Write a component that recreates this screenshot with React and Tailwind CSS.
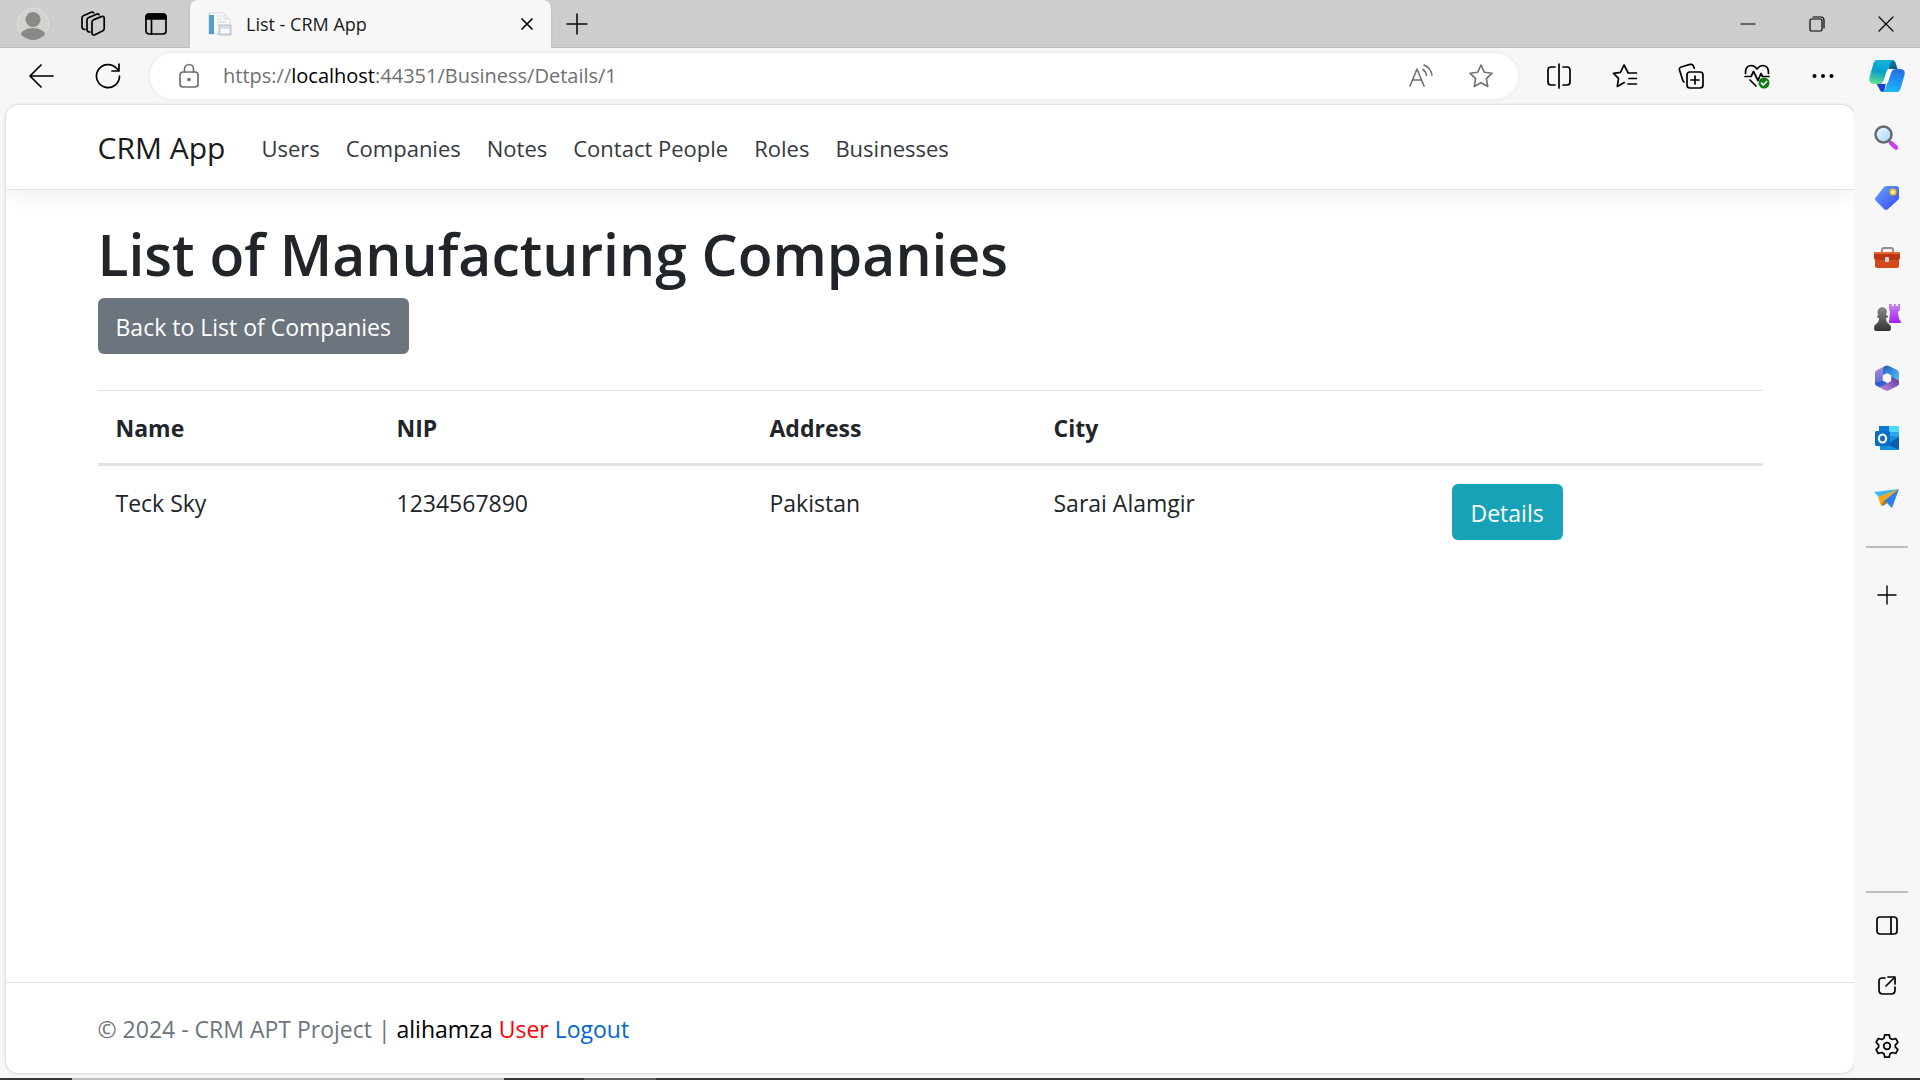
import React from "react";

const Ico = ({ size = 26, sw = 1.7, className = "", children }) => (
  <svg width={size} height={size} viewBox={`0 0 ${size} ${size}`} fill="none" stroke="currentColor" strokeWidth={sw} strokeLinecap="round" strokeLinejoin="round" className={`shrink-0 ${className}`} aria-hidden="true">
    {children}
  </svg>
);

const IconButton = ({ label, className = "", children }) => (
  <button type="button" aria-label={label} className={`flex items-center justify-center shrink-0 ${className}`}>
    {children}
  </button>
);

function TabStrip() {
  return (
    <div className="flex h-12 items-stretch border-b border-[#bdbdbd] bg-[#cdcdcd]">
      <div className="flex w-[190px] shrink-0 items-center">
        <IconButton label="Profile" className="ml-4 w-[34px]">
          <svg width="34" height="34" viewBox="0 0 34 34" aria-hidden="true">
            <defs><clipPath id="avatar"><circle cx="17" cy="17" r="16" /></clipPath></defs>
            <circle cx="17" cy="17" r="16" fill="#d4d2cf" stroke="#dedcd8" />
            <g clipPath="url(#avatar)" fill="#8b8885">
              <circle cx="17" cy="12.500" r="7.500" />
              <ellipse cx="17" cy="29" rx="12.500" ry="8" />
            </g>
          </svg>
        </IconButton>
        <IconButton label="Workspaces" className="ml-[29px] w-[28px]">
          <Ico size={28}>
            <path d="M13 12q0-1.500 1.300-2.100l8-3.300q2.700-1 2.900 1.400v10.500q0 1.500-1.300 2.200l-8 4q-2.700 1-2.900-1.600z" />
            <path d="M11 22q-3 0-3-2.200V10q0-1.600 1.300-2.200l8.200-3.600q1.800-.7 2.500.6" />
            <path d="M6 19.500q-3-.3-3-2.500V8q0-1.600 1.300-2.200l8-3.500q1.700-.7 2.500.6" />
          </Ico>
        </IconButton>
        <IconButton label="Tab actions menu" className="ml-9 w-[26px]">
          <Ico size={26}>
            <rect x="3" y="3" width="20" height="20" rx="3" />
            <path d="M3 8V6q0-3 3-3h14q3 0 3 3v2z" fill="currentColor" />
            <path d="M8.500 9v14" />
          </Ico>
        </IconButton>
      </div>
      <div className="-mb-px flex w-[361px] shrink-0 items-center rounded-t-lg bg-[#f7f7f7] pr-3 pl-[18px] shadow-sm">
        <svg width="24" height="24" viewBox="0 0 24 24" className="shrink-0" aria-hidden="true">
          <path d="M1 1h15l6 6v15H1z" fill="#fbfbfc" stroke="#d5dae0" />
          <path d="M16 1v6h6" fill="#eef1f4" stroke="#d5dae0" />
          <path d="M1 3h5v19H1z" fill="#4f9fd3" />
          <path d="M9 4h5M9 7h5M9 10h9M9 13h2" stroke="#c9d3de" />
          <path d="M11 13h12v10H11z" fill="#d8dfea" stroke="#b5bfcf" />
          <path d="M13 17h8v4h-8z" fill="#fff" />
        </svg>
        <span className="ml-3.5 flex-1 text-[18px] leading-6 text-[#1a1a1a]">List - CRM App</span>
        <IconButton label="Close tab" className="size-6 text-black">
          <Ico size={24}><path d="M7 7l10 10M17 7L7 17" /></Ico>
        </IconButton>
      </div>
      <IconButton label="New tab" className="w-[52px]">
        <Ico size={24} sw={1.5}><path d="M12 2v20M2 12h20" /></Ico>
      </IconButton>
      <div className="ml-auto flex items-stretch text-black">
        <IconButton label="Minimize" className="w-[69px]"><Ico size={18} sw={1.2}><path d="M2 9h14" /></Ico></IconButton>
        <IconButton label="Restore" className="w-[69px]">
          <Ico size={18} sw={1.2}><rect x="2" y="4" width="12" height="12" rx="1.500" /><path d="M5 2h8q3 0 3 3v8" /></Ico>
        </IconButton>
        <IconButton label="Close" className="w-[69px]"><Ico size={18} sw={1.2}><path d="M2 2l14 14M16 2L2 16" /></Ico></IconButton>
      </div>
    </div>
  );
}

function Toolbar() {
  return (
    <div className="flex h-14 items-center bg-[#f7f7f7]">
      <IconButton label="Back" className="ml-7 w-7">
        <Ico size={28}><path d="M2 14h23M13 3L2 14l11 11" /></Ico>
      </IconButton>
      <IconButton label="Refresh" className="ml-[38px] w-7">
        <Ico size={28}><path d="M25.500 14a11.500 11.500 0 1 1-3-7.700L25 9M25 2v7h-7" /></Ico>
      </IconButton>
      <div className="ml-7 flex h-[46px] flex-1 items-center rounded-full bg-white pr-6 pl-[27px] text-[#707070] shadow-[0_0_5px_rgba(0,0,0,0.08)]">
        <IconButton label="View site information" className="w-6">
          <Ico size={26}>
            <rect x="4" y="9" width="18" height="15" rx="3" />
            <path d="M8.500 9V6a4.500 4.500 0 0 1 9 0v3" />
            <circle cx="13" cy="16.500" r="1" fill="currentColor" />
          </Ico>
        </IconButton>
        <div role="textbox" aria-label="Address bar" className="ml-[22px] flex-1 text-[20px] leading-7">
          https://<span className="text-black">localhost</span>:44351/Business/Details/1
        </div>
        <IconButton label="Read aloud" className="mr-[34px] w-[26px]">
          <Ico size={26} sw={1.6}>
            <path d="M2 23L9 6l7 17M4.500 17h9M15 6.500q3 2 3.500 6M16 2q7 3 8 10" />
          </Ico>
        </IconButton>
        <IconButton label="Add to favorites" className="w-[26px]">
          <Ico size={26} sw={1.6}><path d="M13 2l3.300 7.200 7.800 1-5.700 5.400 1.400 7.900L13 19.700l-6.800 3.800 1.400-7.900L1.900 10.200l7.800-1z" /></Ico>
        </IconButton>
      </div>
      <div className="ml-7 flex shrink-0 items-center gap-10 text-black">
        <IconButton label="Split screen" className="w-[26px]">
          <Ico><path d="M9 4H5Q2 4 2 7v12q0 3 3 3h4M17 4h4q3 0 3 3v12q0 3-3 3h-4M13 1v24" /></Ico>
        </IconButton>
        <IconButton label="Favorites" className="w-[26px]">
          <Ico><path d="M16 9.500L12 2 8.500 9.300 1.500 10.400l5 5-1.200 8 7-3.800M16 10h8.500M17 15.500h7.500M16 21h8.500" /></Ico>
        </IconButton>
        <IconButton label="Collections" className="w-[26px]">
          <Ico>
            <rect x="9" y="9" width="16" height="16" rx="3" />
            <path d="M17 13v8M13 17h8M6 19l-1-1L1.500 7q-.6-2.200 1.600-3L12 1.400q2.700-.6 3.500 1.700l.8 2" />
          </Ico>
        </IconButton>
        <IconButton label="Browser essentials" className="w-[26px]">
          <Ico>
            <path d="M1.500 10.500Q1 3 7 2.500q3.500 0 6 3.500 2.500-3.500 6-3.500 6 .5 5.500 8M1 13.500h6l2.500-5 4.500 9 3-7 1.500 3H25M6 17l6 6" />
            <circle cx="20" cy="20" r="5.500" fill="#107c10" stroke="none" />
            <path d="M17.500 20.200l1.800 1.800 3.300-3.500" stroke="#fff" />
          </Ico>
        </IconButton>
        <IconButton label="Settings and more" className="w-[26px]">
          <Ico><g fill="currentColor" stroke="none"><circle cx="4.500" cy="13" r="2" /><circle cx="13" cy="13" r="2" /><circle cx="21.500" cy="13" r="2" /></g></Ico>
        </IconButton>
      </div>
      <IconButton label="Copilot" className="mr-3.5 ml-8 w-[38px]">
        <svg width="38" height="34" viewBox="0 0 38 34" aria-hidden="true">
          <defs>
            <linearGradient id="cpA" x1="0.6" y1="0" x2="0.4" y2="1"><stop offset="0" stopColor="#12b4dc" /><stop offset=".5" stopColor="#0a9ecb" /><stop offset="1" stopColor="#63e08c" /></linearGradient>
            <linearGradient id="cpB" x1="0.6" y1="0" x2="0.4" y2="1"><stop offset="0" stopColor="#2a6ddb" /><stop offset=".6" stopColor="#1c9bf8" /><stop offset="1" stopColor="#1fb8f5" /></linearGradient>
            <linearGradient id="cpC" x1="0" y1="0" x2="1" y2="1"><stop offset="0" stopColor="#0a8fc0" /><stop offset="1" stopColor="#174f72" /></linearGradient>
          </defs>
          <path d="M19 1h5q3 0 4 4l1.500 5h-9z" fill="url(#cpC)" />
          <path d="M8 24h10l-2 9h-1q-3 0-4-4z" fill="#1a3fd0" />
          <path d="M9 1h17q-3.500.500-4.500 5L20 10l-4 11q-1 4-5 4H6Q0 25 1.500 18L5 6q1-5 4-5z" fill="url(#cpA)" />
          <path d="M29 33H14q3-1 4-5l4-13q1-5 5-5h5q6 0 4.500 6L33 28q-1 5-4 5z" fill="url(#cpB)" />
          <path d="M22 10h5q-3 .5-4 4l-2.500 8q-1 3-4.500 3h-4q3-.5 4-4l2-7q1-4 4-4z" fill="#fff" />
        </svg>
      </IconButton>
    </div>
  );
}

const sideIcons = [
  ["Search", <>
    <defs><linearGradient id="lens" x1="0" y1="0" x2="1" y2="1"><stop stopColor="#eef8ff" /><stop offset="1" stopColor="#a5d8fa" /></linearGradient></defs>
    <path d="M16 17l3 3" stroke="#777" strokeWidth="3" /><path d="M18.500 19.500l4.500 4" stroke="#c044f0" strokeWidth="4.500" strokeLinecap="round" />
    <circle cx="10.500" cy="10.500" r="8" fill="url(#lens)" stroke="#666a6b" strokeWidth="2.500" /></>],
  ["Shopping", <>
    <defs><linearGradient id="tag" x1="0" y1="0" x2="1" y2="1"><stop stopColor="#63a8ff" /><stop offset="1" stopColor="#3b45ec" /></linearGradient></defs>
    <path d="M13 2h10q3 0 3 3v9q0 1-1 2L15 25q-2 2-4 0l-8-8q-2-2 0-4L11 3z" fill="url(#tag)" /><circle cx="20" cy="8" r="2.500" fill="#fff" stroke="#f5c51b" strokeWidth="2" /></>],
  ["Tools", <>
    <path d="M9 9V6q0-2 2-2h7q2 0 2 2v3" fill="none" stroke="#8f9092" strokeWidth="2" />
    <path d="M2 14h24v8q0 2-2 2H4q-2 0-2-2z" fill="#d3491b" /><path d="M1 9q0-1 1-1h24q1 0 1 1v5q0 2-2 2H3q-2 0-2-2z" fill="#b9380f" /><path d="M1 8h26v2H1z" fill="#e8662c" /><rect x="12" y="13" width="4" height="5" rx="1" fill="#d0d3d6" /></>],
  ["Games", <>
    <defs><linearGradient id="rook" x1="0" y1="0" x2="0" y2="1"><stop stopColor="#c985f0" /><stop offset="1" stopColor="#a320f0" /></linearGradient><linearGradient id="pawn" x1="0" y1="0" x2="0" y2="1"><stop stopColor="#8a8a8a" /><stop offset="1" stopColor="#333" /></linearGradient></defs>
    <path d="M16 0h3v2h2V0h2v2h2V0h2v6l-2 2 1 7q2 1 2 4H16l1-11-1-3z" fill="url(#rook)" />
    <path d="M9 3a5 5 0 0 1 4 8q2 0 2 1.500T13 14q0 4 3 6 2 1 2 4 0 3-2 3H3q-2 0-2-3 0-3 2-4 3-2 3-6-2 0-2-1.500T5.500 11A5 5 0 0 1 9 3z" fill="url(#pawn)" /></>],
  ["Microsoft 365", <>
    <defs><linearGradient id="mA" x1="0" y1="0" x2="1" y2="1"><stop stopColor="#2458b8" /><stop offset=".5" stopColor="#3c93dd" /><stop offset="1" stopColor="#5cc8f2" /></linearGradient><linearGradient id="mB" x1="0" y1="1" x2="1" y2="0"><stop stopColor="#c090e4" /><stop offset="1" stopColor="#5c3690" /></linearGradient><linearGradient id="mC" x1="0" y1="0" x2="0" y2="1"><stop stopColor="#b48ade" /><stop offset="1" stopColor="#3567d4" /></linearGradient></defs>
    <path d="M12 2L4 6Q2 7 2 9v10q0 2 2 3l8 4 4-12z" fill="url(#mC)" />
    <path d="M12 2q2-1 4 0l8 4q2 1 2 3v9l-9-4-7-4V4z" fill="url(#mA)" />
    <path d="M26 17v2q0 2-2 3l-8 4q-2 1-4 0l-7-3.500q5 1 8-1l5-3v-6z" fill="url(#mB)" />
    <path d="M8 23l6-4-2-3-10 3q0 2 2 3z" fill="#2f5fcf" />
    <path d="M26 17v2q0 2-2 3l-8 4q-2 1-4 0l-7-3.500q3 .5 6-1L18 17l1-4z" fill="url(#mB)" />
    <path d="M14 10l3.500 2v4L14 18l-3.500-2v-4z" fill="#f7f7f7" stroke="#f7f7f7" strokeWidth="1.500" strokeLinejoin="round" /></>],
  ["Outlook", <>
    <path d="M6 2h19q1 0 1 1v10H6z" fill="#28a8ea" /><path d="M16 2h10v6H16z" fill="#50d9ff" /><path d="M6 2h10v6H6z" fill="#0f79d0" /><path d="M6 12h20v12q0 2-2 2H7z" fill="#1490df" /><path d="M26 13v13L14 20z" fill="#0a5fae" /><rect x="2" y="7" width="15" height="15" rx="1.500" fill="#0a6cc4" /><ellipse cx="9.500" cy="14.500" rx="3.600" ry="4" fill="none" stroke="#fff" strokeWidth="2.200" /></>],
  ["Drop", <>
    <path d="M1 8L26 5 8 15z" fill="#3fb4ee" /><path d="M26 5L19 24l-5-5-4 3-2-7z" fill="#2f7fe8" /><path d="M26 5L5 13l3 9 3-5z" fill="#f0a91d" /><path d="M8 22l3-6 3 3z" fill="#c2790d" /></>],
];

function Sidebar() {
  return (
    <aside aria-label="Sidebar" className="flex w-[66px] shrink-0 flex-col items-center bg-[#f7f7f7] text-black">
      <div className="mt-[19px] flex flex-col items-center gap-8">
        {sideIcons.map(([name, art]) => (
          <IconButton key={name} label={name} className="size-7">
            <svg width="28" height="28" viewBox="0 0 28 28" aria-hidden="true">{art}</svg>
          </IconButton>
        ))}
      </div>
      <div className="mt-[34px] h-0.5 w-[42px] bg-[#bdbdbd]" />
      <IconButton label="Customize" className="mt-[37px] w-5"><Ico size={20} sw={1.4}><path d="M10 1v18M1 10h18" /></Ico></IconButton>
      <div className="mt-auto h-0.5 w-[42px] bg-[#bdbdbd]" />
      <div className="mt-5 mb-3.5 flex flex-col items-center gap-[34px]">
        <IconButton label="Hide sidebar" className="w-[26px]"><Ico><rect x="3" y="4" width="20" height="17" rx="3" /><path d="M17 4v17" /></Ico></IconButton>
        <IconButton label="Open link" className="w-[26px]"><Ico><path d="M11 5H8Q5 5 5 8v9q0 4 4 4h8q4 0 4-4v-3M14 4h7v7M21 4l-9 9" /></Ico></IconButton>
        <IconButton label="Settings" className="w-[26px]">
          <Ico>
            <circle cx="13" cy="13" r="3.300" />
            <path d="M10.800 1.800h4.400l.8 3.400 2.300 1.300 3.400-1 2.200 3.900-2.500 2.400v2.400l2.500 2.400-2.200 3.900-3.400-1-2.300 1.300-.8 3.400h-4.400l-.8-3.400-2.300-1.300-3.400 1-2.200-3.900 2.500-2.400v-2.400L2.100 9.400l2.200-3.900 3.400 1L10 5.200z" />
          </Ico>
        </IconButton>
      </div>
    </aside>
  );
}

const links = ["Users", "Companies", "Notes", "Contact People", "Roles", "Businesses"];

function Page() {
  return (
    <div className="ml-1.5 flex flex-1 flex-col overflow-hidden rounded-xl bg-white text-[23px] leading-9 text-[#212529] shadow-[0_0_3px_rgba(0,0,0,0.25)]">
      <header className="border-b border-[#dee2e6] shadow-[0_6px_18px_rgba(0,0,0,0.06)]">
        <nav className="mx-auto flex h-[84px] max-w-[1665px] items-center pt-0.5">
          <a href="#" className="mr-9 text-[30px] text-[#1a1a1a]">CRM App</a>
          <ul className="flex gap-[26px] text-[22px]">
            {links.map((l) => <li key={l}><a href="#" className="text-[#343a40]">{l}</a></li>)}
          </ul>
        </nav>
      </header>
      <main className="mx-auto w-full max-w-[1665px] flex-1 pt-7">
        <h1 className="mb-2 text-[57px] leading-[72px] font-semibold">List of Manufacturing Companies</h1>
        <a href="#" className="inline-flex h-14 items-center rounded-md bg-[#6c757d] px-[18px] pt-0.5 text-white">Back to List of Companies</a>
        <table className="mt-9 w-full table-fixed border-collapse text-left">
          <colgroup>
            <col className="w-[281px]" /><col className="w-[373px]" /><col className="w-[284px]" /><col className="w-[398px]" /><col />
          </colgroup>
          <thead>
            <tr className="border-t border-b-3 border-t-[#dee2e6] border-b-[#dee2e6]">
              {["Name", "NIP", "Address", "City", ""].map((h, i) => <th key={i} className="px-[18px] pt-[19px] pb-[17px] font-bold">{h}</th>)}
            </tr>
          </thead>
          <tbody>
            <tr className="align-top">
              {["Teck Sky", "1234567890", "Pakistan", "Sarai Alamgir"].map((c) => <td key={c} className="px-[18px] pt-[19px] pb-[17px]">{c}</td>)}
              <td className="p-[18px]"><a href="#" className="inline-flex h-14 items-center rounded-md bg-[#17a2b8] px-[19px] pt-0.5 text-white">Details</a></td>
            </tr>
          </tbody>
        </table>
      </main>
      <footer className="border-t border-[#dee2e6] text-[#6c757d]">
        <div className="mx-auto flex h-[90px] max-w-[1665px] items-center pt-0.5">
          <p>© 2024 - CRM APT Project | <span className="text-black">alihamza</span> <span className="text-[#ff0000]">User</span> <a href="#" className="text-[#0366d6]">Logout</a></p>
        </div>
      </footer>
    </div>
  );
}

export default function App() {
  return (
    <div className="flex h-screen flex-col bg-[#f7f7f7] font-['Open_Sans','Noto_Sans',sans-serif]">
      <TabStrip />
      <Toolbar />
      <div className="mt-px mb-[5px] flex min-h-0 flex-1">
        <Page />
        <Sidebar />
      </div>
      <div className="flex h-0.5 shrink-0 bg-[#333735]">
        <div className="ml-[72px] w-[432px] bg-[#bdbfbd]" />
        <div className="ml-20 w-[72px] bg-[#5c5f5d]" />
      </div>
    </div>
  );
}
